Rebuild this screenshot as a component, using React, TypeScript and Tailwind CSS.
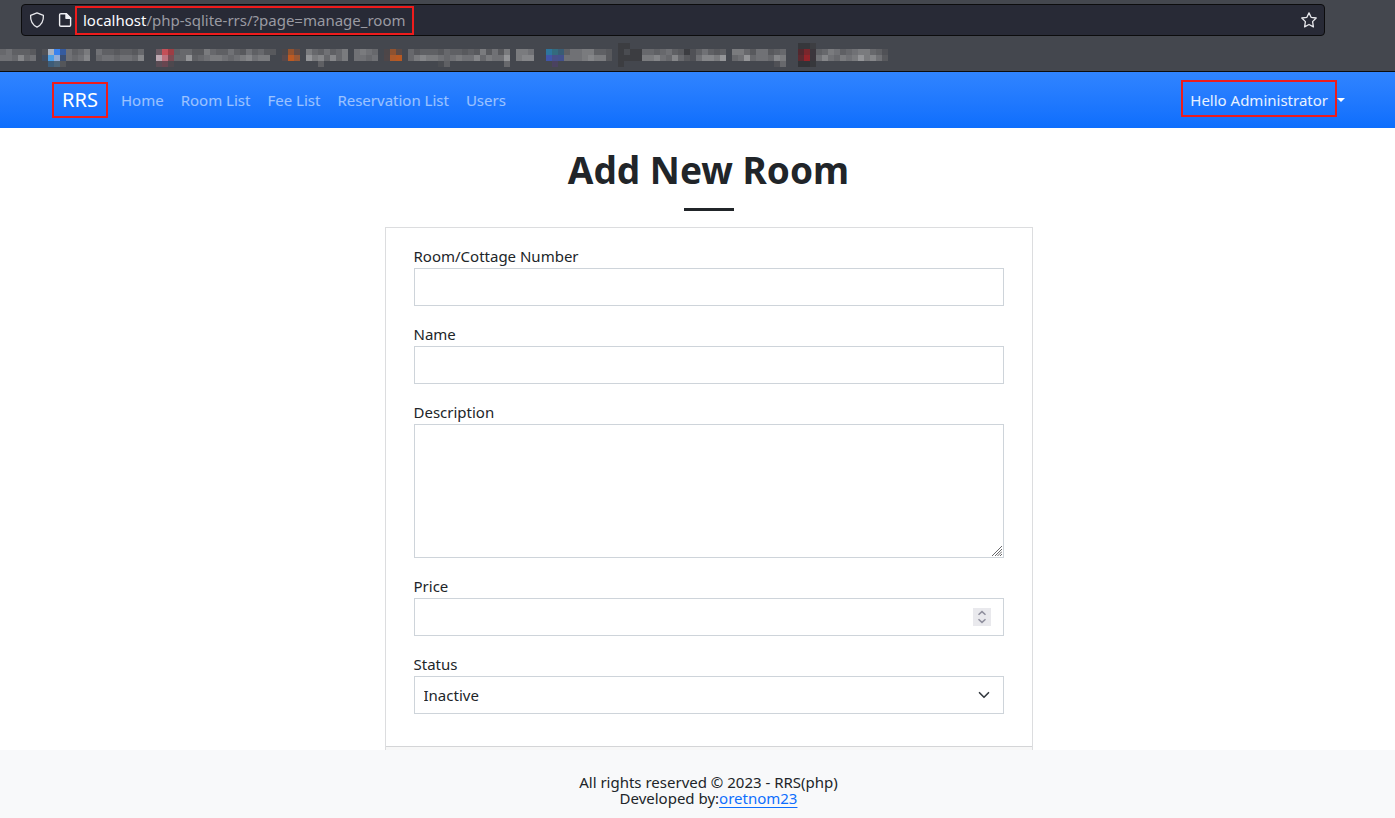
import type { ReactNode } from "react";

type Run = { at: number; top?: string; a: string; b: string; c?: string };

const CELL = 6;

const GRAYS: Record<string, string> = {
  "0": "#3c3d41",
  "1": "#4a4c51",
  "2": "#505156",
  "3": "#58595d",
  "4": "#5f6064",
  "5": "#67686c",
  "6": "#707175",
  "7": "#7a7b7e",
  "8": "#858689",
  "9": "#949598",
};

const RUNS: Run[] = [
  { at: 0, a: "564443", b: "665856" },
  { at: 7, a: "2", b: " " },
  { at: 11, a: "6457", b: "6568" },
  { at: 16, a: "64434435", b: "56656658" },
  { at: 29, a: "45533754464364533", b: "5594567765678677 " },
  { at: 51, a: "7546457", b: "9785857", c: "  4" },
  { at: 59, a: "6765", b: "6656" },
  { at: 68, a: "53444354434373637", b: "57877656766857669", c: "     14         5" },
  { at: 86, a: "776", b: "788" },
  { at: 94, a: "46677443", b: "66678773" },
  { at: 103, top: "00", a: "0100", b: "0000", c: "0" },
  { at: 107, a: "554564302", b: "778658532" },
  { at: 116, a: "46434", b: "68879" },
  { at: 122, a: "775366345", b: "569566587", c: "       25" },
  { at: 136, a: "457645677542", b: "686576797863" },
];

const COLORED: [number, number, string][] = [
  [8, 1, "#a9b2c0"], [9, 1, "#3a82ee"], [10, 1, "#355b9f"],
  [7, 2, "#3f4d62"], [8, 2, "#4d9fe4"], [9, 2, "#93acd6"], [10, 2, "#3b4f72"],
  [8, 3, "#3d5c78"], [9, 3, "#4c6478"], [10, 3, "#54565a"],
  [26, 1, "#6b5a62"], [27, 1, "#c45058"], [28, 1, "#9d3d44"],
  [26, 2, "#bda9b2"], [27, 2, "#bd727e"], [28, 2, "#7c4a52"],
  [26, 3, "#5b4c54"], [27, 3, "#684650"], [28, 3, "#4e484e"],
  [47, 1, "#4b4648"], [48, 1, "#93522e"], [49, 1, "#644a42"],
  [47, 2, "#57484a"], [48, 2, "#bd5a22"], [49, 2, "#9a5834"],
  [64, 1, "#4d4648"], [65, 1, "#8f5230"], [66, 1, "#5c4944"],
  [64, 2, "#4f4648"], [65, 2, "#ae5a2a"], [66, 2, "#b85922"],
  [91, 1, "#2e759c"], [92, 1, "#336b7e"], [93, 1, "#395c74"],
  [91, 2, "#4055a8"], [92, 2, "#485088"], [93, 2, "#43518c"],
  [92, 3, "#4a4260"],
  [133, 0, "#36373b"], [134, 0, "#36373b"], [135, 0, "#3d3e42"],
  [133, 1, "#52282e"], [134, 1, "#7a262c"], [135, 1, "#3b363c"],
  [133, 2, "#5c2a30"], [134, 2, "#94232a"], [135, 2, "#3b363c"],
  [133, 3, "#323337"], [134, 3, "#323337"], [135, 3, "#37383c"],
];

function runCells(run: Run): [number, number, string][] {
  return [run.top ?? "", run.a, run.b, run.c ?? ""].flatMap((line, row) =>
    line
      .split("")
      .map((ch, i): [number, number, string] => [run.at + i, row, GRAYS[ch] ?? "none"])
      .filter((cell) => cell[2] !== "none"),
  );
}

function Bookmarks() {
  return (
    <svg width="900" height="24" shapeRendering="crispEdges" aria-hidden="true" className="block shrink-0">
      {[...RUNS.flatMap(runCells), ...COLORED].map(([x, y, fill], i) => (
        <rect key={i} x={x * CELL} y={y * CELL} width={CELL} height={CELL} fill={fill} />
      ))}
    </svg>
  );
}

function BrowserBar() {
  return (
    <div className="h-[72px] shrink-0 overflow-hidden border-b border-[#0c0c0d] bg-[#44474e] pt-1">
      <div className="mr-[70px] ml-[21px] flex h-8 items-center rounded border border-[#0c0c0d] bg-[#282a36] pr-[7px] pl-[7px]">
        <svg width="16" height="16" viewBox="0 0 16 16" fill="none" stroke="#e8e8ec" strokeWidth="1.3" strokeLinejoin="round" aria-hidden="true">
          <path d="M8 .8 14.4 3.4C14.7 8.6 12.7 12.8 8 15.2 3.3 12.8 1.3 8.6 1.6 3.4Z" />
        </svg>
        <svg className="ml-3" width="16" height="16" viewBox="0 0 16 16" fill="none" stroke="#f0f0f4" strokeWidth="1.4" strokeLinejoin="round" aria-hidden="true">
          <path d="M9.4 1.7H4a1.4 1.4 0 0 0-1.4 1.4v9.8A1.4 1.4 0 0 0 4 14.3h8.2a1.4 1.4 0 0 0 1.4-1.4V6Z" />
          <path d="M9 1.7V6.2h4.6Z" fill="#f0f0f4" />
        </svg>
        <div className="ml-[2px] flex h-[29px] w-[339px] items-center border-2 border-[#ee1c1c] pl-[6px] whitespace-nowrap text-[#9a9aa2]">
          <span className="text-[#fbfbfe]">localhost</span>/php-sqlite-rrs/?page=manage_room
        </div>
        <button type="button" aria-label="Bookmark this page" className="ml-auto">
          <svg width="16" height="16" viewBox="0 0 16 16" fill="none" stroke="#e8e8ec" strokeWidth="1.3" strokeLinejoin="round" aria-hidden="true">
            <path d="M8 .9 10.1 5.3 15.2 6 11.6 9.6 12.4 14.9 8 12.5 3.6 14.9 4.4 9.6.8 6 5.9 5.3Z" />
          </svg>
        </button>
      </div>
      <div className="pt-[7px]">
        <Bookmarks />
      </div>
    </div>
  );
}

const LINKS = ["Home", "Room List", "Fee List", "Reservation List", "Users"];

function Navbar() {
  return (
    <nav className="flex h-14 shrink-0 items-center bg-linear-to-b from-[#3084ff] to-[#0d6efd] pr-[50px] pl-[52px]">
      <a href="#" className="mr-[5px] flex h-9 w-14 items-center justify-center border-2 border-[#ee1c1c] text-xl text-white">
        RRS
      </a>
      <ul className="flex gap-px">
        {LINKS.map((link) => (
          <li key={link}>
            <a href="#" className="px-2 whitespace-nowrap text-white/55">{link}</a>
          </li>
        ))}
      </ul>
      <button type="button" className="ml-auto flex items-center pb-[3px] text-white/90">
        <span className="flex h-[37px] items-center border-2 border-[#ee1c1c] px-[7px] pt-[3px]">Hello Administrator</span>
        <svg className="mt-[3px]" width="8" height="4" viewBox="0 0 8 4" fill="#fff" aria-hidden="true">
          <path d="M0 0H8L4 4Z" />
        </svg>
      </button>
    </nav>
  );
}

function Field({ id, label, children }: { id: string; label: string; children: ReactNode }) {
  return (
    <div className="mb-4 flex flex-col">
      <label htmlFor={id} className="leading-6">{label}</label>
      {children}
    </div>
  );
}

function RoomForm() {
  return (
    <form className="mx-auto mt-4 w-full max-w-[648px] border border-[#dcdddf] bg-white">
      <div className="px-7 py-4">
        <Field id="number" label="Room/Cottage Number">
          <input id="number" type="text" className="h-[38px] border border-[#ced4da] bg-white px-3" />
        </Field>
        <Field id="name" label="Name">
          <input id="name" type="text" className="h-[38px] border border-[#ced4da] bg-white px-3" />
        </Field>
        <Field id="description" label="Description">
          <div className="relative flex">
            <textarea id="description" className="h-[134px] w-full resize-none border border-[#ced4da] bg-white px-3 py-1.5" />
            <svg className="pointer-events-none absolute right-[2px] bottom-[2px]" width="10" height="10" viewBox="0 0 10 10" stroke="#68686b" strokeWidth="1" aria-hidden="true">
              <path d="M0 10 10 0M3 10 10 3M5.5 10 10 5.5M8 10 10 8" />
            </svg>
          </div>
        </Field>
        <Field id="price" label="Price">
          <div className="relative flex">
            <input id="price" type="text" inputMode="numeric" className="h-[38px] w-full border border-[#ced4da] bg-white px-3" />
            <svg className="pointer-events-none absolute top-[10px] right-[13px]" width="18" height="18" viewBox="0 0 18 18" fill="none" stroke="#8f8f9d" strokeWidth="1.5" aria-hidden="true">
              <path d="M0 0H18V18H0Z" fill="#e9e9ed" stroke="none" />
              <path d="M5.5 6.8 9 3.6 12.5 6.8M5.5 11.2 9 14.4 12.5 11.2" />
            </svg>
          </div>
        </Field>
        <Field id="status" label="Status">
          <div className="relative flex">
            <select id="status" defaultValue="Inactive" className="h-[38px] w-full appearance-none border border-[#ced4da] bg-white pr-9 pl-[9px]">
              <option>Active</option>
              <option>Inactive</option>
            </select>
            <svg className="pointer-events-none absolute top-[13px] right-[14px]" width="12" height="12" viewBox="0 0 16 16" fill="none" stroke="#343a40" strokeWidth="2.2" strokeLinecap="round" strokeLinejoin="round" aria-hidden="true">
              <path d="m2 5 6 6 6-6" />
            </svg>
          </div>
        </Field>
      </div>
      <div className="h-14 border-t border-[#d4d5d7] bg-[#f7f7f7]" />
    </form>
  );
}

export default function App() {
  return (
    <div className="flex h-screen flex-col bg-white font-['Noto_Sans',sans-serif] text-[15px] leading-6 text-[#212529]">
      <BrowserBar />
      <Navbar />
      <main className="min-h-0 flex-1 overflow-hidden pt-[18px] pl-[22px]">
        <h1 className="text-center text-[37px] leading-[48px] font-bold">Add New Room</h1>
        <hr className="mx-auto mt-[14px] h-[3px] w-[50px] border-0 bg-[#212529]" />
        <RoomForm />
      </main>
      <footer className="shrink-0 bg-[#f8f9fa] pt-6 pb-3 pl-[22px] text-center leading-4">
        <div>All rights reserved © 2023 - RRS(php)</div>
        <div>
          Developed by:<a href="#" className="text-[#0d6efd] underline underline-offset-3">oretnom23</a>
        </div>
      </footer>
    </div>
  );
}
